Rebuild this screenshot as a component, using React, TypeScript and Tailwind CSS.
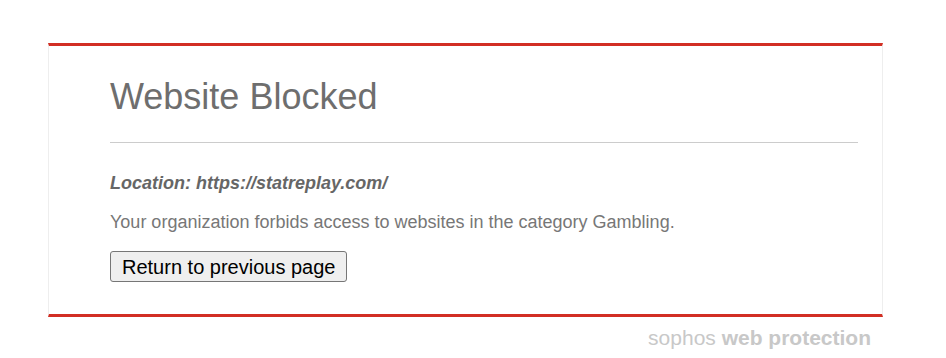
export default function App() {
  return (
    <div className="min-h-[358px] w-full bg-white pt-[43px] font-['Liberation_Sans',Arial,sans-serif]">
      <div className="ml-[48px] w-[835px]">
        <div className="border-x border-t-[3px] border-b-[3px] border-x-[#eeeeee] border-t-[#d22f24] border-b-[#d22f24] bg-white pb-[32px] pl-[61px] pr-[24px] pt-[30px]">
          <h1 className="text-[36px] font-normal leading-[42px] text-[#6e6e6e]">
            Website Blocked
          </h1>
          <hr className="mt-[24px] border-t border-[#cccccc]" />
          <p className="mt-[30px] text-[18px] font-bold italic leading-[20px] text-[#666666]">
            Location: https://statreplay.com/
          </p>
          <p className="mt-[19px] text-[18px] leading-[20px] text-[#777777]">
            Your organization forbids access to websites in the category Gambling.
          </p>
          <button className="mt-[19px] h-[31px] rounded-[3px] border border-[#767676] bg-[#efefef] px-[11px] text-[20px] leading-[24px] text-black">
            Return to previous page
          </button>
        </div>
        <div className="pr-[12px] pt-[9px] text-right text-[21px] leading-[24px] text-[#c8c8c8]">
          sophos <span className="font-bold">web protection</span>
        </div>
      </div>
    </div>
  );
}
